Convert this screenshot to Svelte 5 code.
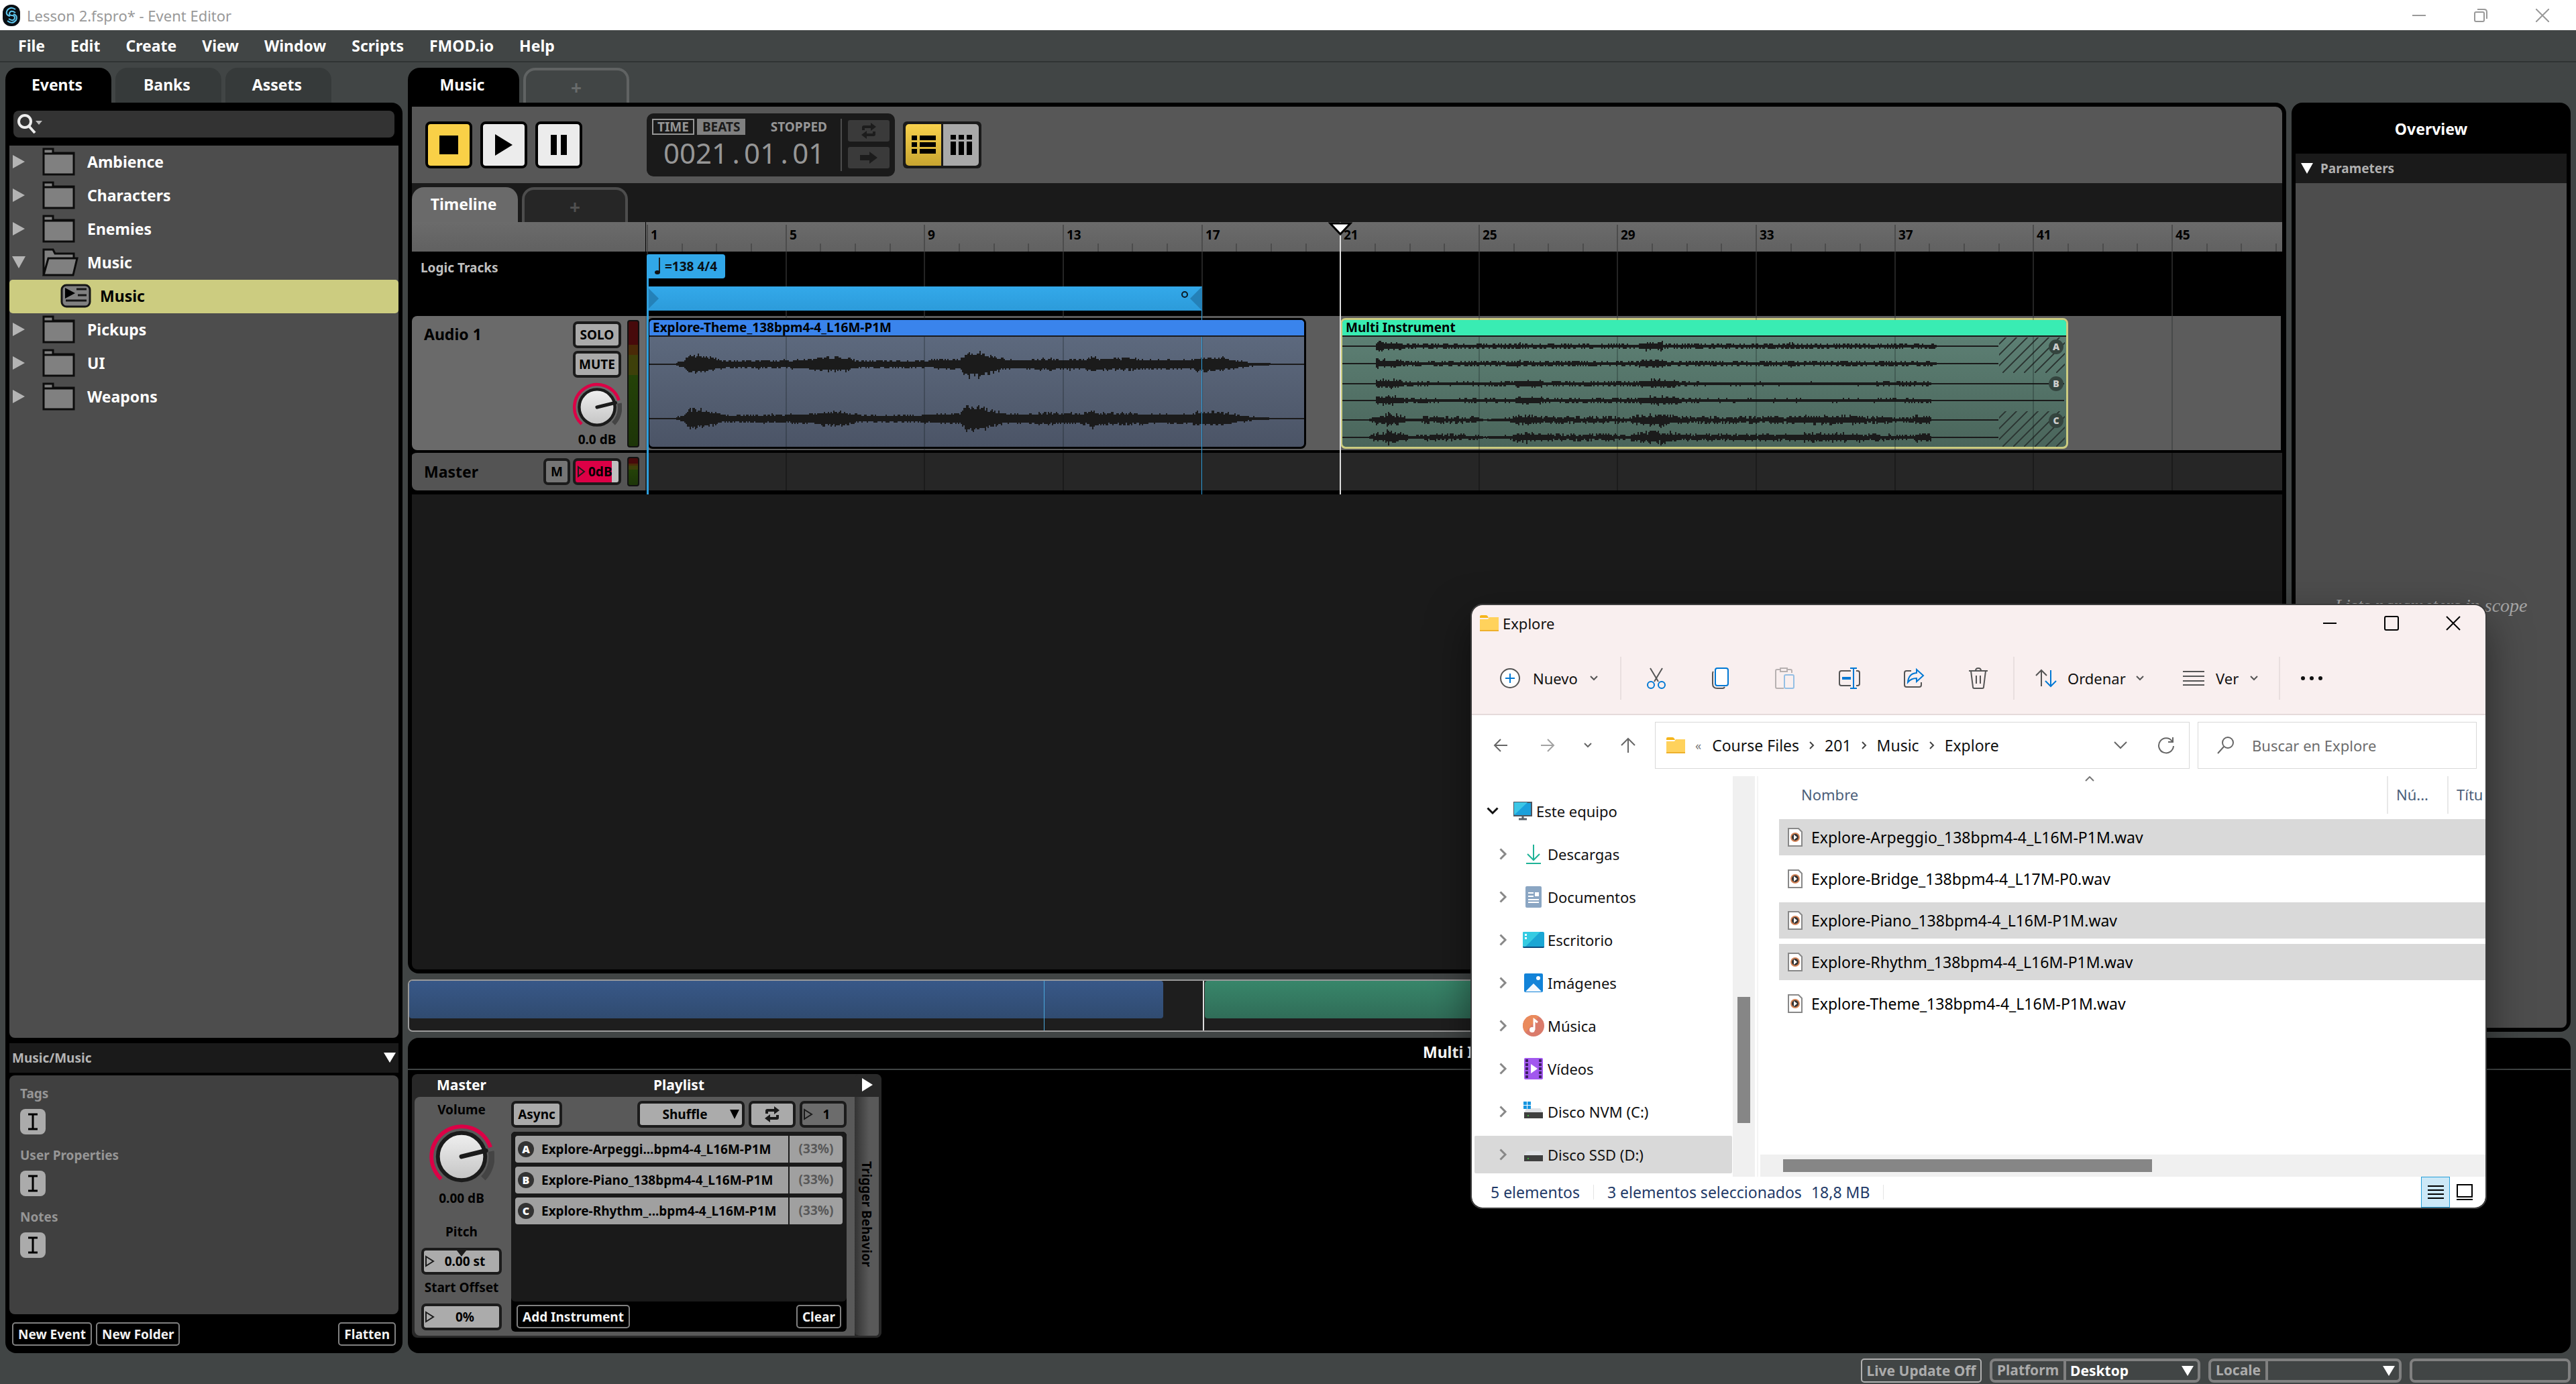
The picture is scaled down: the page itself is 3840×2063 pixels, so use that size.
<script>
  const menus = ['File', 'Edit', 'Create', 'View', 'Window', 'Scripts', 'FMOD.io', 'Help'];
  const tree = [
    { name: 'Ambience' },
    { name: 'Characters' },
    { name: 'Enemies' },
    { name: 'Music', open: true },
    { name: 'Music', event: true },
    { name: 'Pickups' },
    { name: 'UI' },
    { name: 'Weapons' }
  ];
  const props = ['Tags', 'User Properties', 'Notes'];
  const playlist = [
    { id: 'A', name: 'Explore-Arpeggi...bpm4-4_L16M-P1M' },
    { id: 'B', name: 'Explore-Piano_138bpm4-4_L16M-P1M' },
    { id: 'C', name: 'Explore-Rhythm_...bpm4-4_L16M-P1M' }
  ];
  const places = [
    { name: 'Descargas', icon: 'down' },
    { name: 'Documentos', icon: 'doc' },
    { name: 'Escritorio', icon: 'desk' },
    { name: 'Imágenes', icon: 'img' },
    { name: 'Música', icon: 'music' },
    { name: 'Vídeos', icon: 'video' },
    { name: 'Disco NVM (C:)', icon: 'nvm' },
    { name: 'Disco SSD (D:)', icon: 'ssd', selected: true }
  ];
  const files = [
    { name: 'Explore-Arpeggio_138bpm4-4_L16M-P1M.wav', selected: true },
    { name: 'Explore-Bridge_138bpm4-4_L17M-P0.wav' },
    { name: 'Explore-Piano_138bpm4-4_L16M-P1M.wav', selected: true },
    { name: 'Explore-Rhythm_138bpm4-4_L16M-P1M.wav', selected: true },
    { name: 'Explore-Theme_138bpm4-4_L16M-P1M.wav' }
  ];

  // Timeline scale: x position inside a lane for a given bar number
  const barWidth = 51.66;
  const barX = (bar) => Math.round(2 + (bar - 1) * barWidth);
  const bars = Array.from({ length: 48 }, (_, i) => i + 1);
  const majors = bars.filter((b) => b % 4 === 1);

  function noise(seed) {
    let s = seed;
    return () => {
      s = (s * 1103515245 + 12345) % 2147483648;
      return s / 2147483648;
    };
  }

  // Builds a stepped waveform outline from [x, amplitude] key points
  function wave(points, mid, seed, jitter = 0.5) {
    const rand = noise(seed);
    const top = [];
    const bottom = [];
    const last = points[points.length - 1][0];
    let k = 0;
    for (let x = 0; x < last; x += 2) {
      while (k < points.length - 2 && points[k + 1][0] <= x) k++;
      const [x0, a0] = points[k];
      const [x1, a1] = points[k + 1];
      const base = a0 + ((a1 - a0) * (x - x0)) / (x1 - x0);
      const amp = (r) => (base <= 1 ? 1 : Math.max(1, Math.round((base * (1 - jitter * 0.3 + jitter * r * r)) / 2) * 2));
      const up = amp(rand());
      const dn = amp(rand());
      top.push(`L${x} ${mid - up}L${x + 2} ${mid - up}`);
      bottom.unshift(`L${x + 2} ${mid + dn}L${x} ${mid + dn}`);
    }
    return `M0 ${mid}` + top.join('') + bottom.join('') + 'Z';
  }

  const theme = [[0, 1], [38, 1], [42, 3], [50, 4], [58, 13], [84, 11], [110, 5], [140, 5], [225, 6], [262, 9], [285, 10], [310, 5], [400, 5], [455, 7], [463, 6], [472, 17], [490, 16], [510, 11], [535, 6], [560, 6], [594, 8], [630, 7], [650, 7], [660, 12], [670, 8], [721, 8], [760, 6], [804, 6], [815, 9], [850, 9], [870, 6], [895, 3], [925, 1], [975, 1]];
  const arp = [[0, 1], [48, 1], [50, 6], [62, 6], [64, 4], [86, 4], [88, 3], [255, 3], [262, 4], [270, 3], [436, 3], [455, 5], [475, 5], [480, 3], [660, 3], [670, 4], [680, 3], [700, 3], [800, 3], [884, 3], [886, 1], [978, 1]];
  const piano = [[0, 1], [48, 1], [50, 5], [85, 5], [90, 3], [150, 2], [255, 3], [262, 4], [295, 4], [300, 3], [436, 3], [458, 5], [485, 5], [505, 3], [550, 2], [700, 2], [770, 2], [876, 3], [878, 1], [1076, 1]];
  const rhythm = [[0, 1], [38, 1], [42, 3], [70, 8], [90, 5], [98, 2], [115, 2], [122, 4], [160, 4], [200, 3], [210, 1], [245, 2], [255, 4], [275, 6], [300, 4], [350, 4], [400, 4], [425, 2], [440, 6], [475, 7], [505, 4], [540, 4], [600, 4], [660, 4], [700, 5], [740, 5], [780, 4], [826, 3], [848, 3], [855, 5], [874, 5], [878, 1], [978, 1]];
  const themeWaves = [wave(theme, 41, 7), wave(theme, 122, 91)];
  const multiWaves = [wave(arp, 14, 5, 0.8), wave(arp, 40, 11, 0.8), wave(piano, 70, 23, 0.8), wave(piano, 95, 31, 0.8), wave(rhythm, 124, 47, 1), wave(rhythm, 150, 59, 1)];
  const hatch = Array.from({ length: 11 }, (_, i) => i);
</script>

{#snippet chev(dir)}
  <svg class="chev" class:right={dir === 'right'} viewBox="0 0 12 12" width="12" height="12" aria-hidden="true"><path d="M1 3l5 5 5-5" /></svg>
{/snippet}

{#snippet knob(size, label)}
  <label class="knob">
    <svg viewBox="-50 -50 100 100" width={size} height={size} aria-hidden="true">
      <defs><linearGradient id="cap{size}" x1="0" y1="0" x2="0" y2="1"><stop offset="0" stop-color="#f0f0f0" /><stop offset="1" stop-color="#c4c4c4" /></linearGradient></defs>
      <path d="M-31 34A46 46 0 1 1 44 -14" fill="none" stroke="#dc0046" stroke-width="6" />
      <path d="M45 -8A46 46 0 0 1 33 33" fill="none" stroke="#444" stroke-width="9" />
      <circle r="36" fill="url(#cap{size})" stroke="#1b1b1b" stroke-width="6" />
      <path d="M0 0L37 -9" stroke="#1b1b1b" stroke-width="7" stroke-linecap="round" />
    </svg>
    <input type="range" aria-label={label} />
  </label>
{/snippet}

{#snippet loopIcon(color)}
  <svg viewBox="0 0 28 24" width="28" height="24" fill={color} aria-hidden="true"><path d="M4 11V7q0-3 3-3h10V0l8 6-8 6V8H8v3zM24 13v4q0 3-3 3H11v4l-8-6 8-6v4h9v-3z" /></svg>
{/snippet}

{#snippet gridLines()}
  <svg class="grid-lines" aria-hidden="true">
    {#each majors as b}<rect x={barX(b)} y="0" width="2" height="100%" />{/each}
  </svg>
{/snippet}

{#snippet folderIcon()}
  <svg viewBox="0 0 28 24" width="28" height="24" aria-hidden="true">
    <path d="M0 2q0-2 2-2h7q2 0 3 2l1 2H0z" fill="#f5b51c" /><path d="M0 6h12l2-3h14v19q0 1-1 1H0z" fill="#ffd25c" /><path d="M0 22h28v2H0z" fill="#eeb02c" />
  </svg>
{/snippet}

{#snippet placeIcon(kind)}
  <svg viewBox="0 0 32 32" width="32" height="32" aria-hidden="true">
    {#if kind === 'down'}
      <path d="M16 2v23M7 16l9 9 9-9M5 30h22" fill="none" stroke="#1fb397" stroke-width="2" />
    {:else if kind === 'doc'}
      <rect x="4" width="24" height="32" rx="2" fill="#8ba6c3" /><path d="M8 10h8M8 15h8M8 20h16M8 24h16" stroke="#fff" stroke-width="2" /><rect x="18" y="9" width="6" height="6" fill="#fff" />
    {:else if kind === 'desk'}
      <rect y="4" width="32" height="24" rx="2" fill="#1ba6d4" /><path d="M0 6q0-2 2-2h24L4 26H0z" fill="#35cbe2" /><path d="M0 26h32q0 2-2 2H2q-2 0-2-2z" fill="#0b4a7c" /><path d="M3 7h3v3H3zM3 12h3v3H3z" fill="#fff" />
    {:else if kind === 'img'}
      <rect x="2" y="2" width="28" height="28" rx="2" fill="#1283d8" /><path d="M4 29l12-12 12 12z" fill="#f1f7fd" /><circle cx="23" cy="9" r="3" fill="#fff" />
    {:else if kind === 'music'}
      <circle cx="16" cy="16" r="16" fill="#da7b6b" /><path d="M2 8A16 16 0 0 1 24 2L4 26A16 16 0 0 1 2 8z" fill="#ea8a5c" /><circle cx="14" cy="22" r="4" fill="#fff" /><path d="M17 22V7l5 4" fill="none" stroke="#fff" stroke-width="3" />
    {:else if kind === 'video'}
      <rect x="2" width="28" height="32" rx="2" fill="#a258ef" /><path d="M6 2v28M26 2v28" stroke="#3c2161" stroke-width="4" stroke-dasharray="4 2" /><path d="M12 9l10 7-10 7z" fill="#fff" />
    {:else}
      <path d="M6 11h20l4 6H2z" fill="#e0e2e6" /><rect x="2" y="17" width="28" height="9" fill="#3f3f3f" /><circle cx="8" cy="22" r="1" fill="#3fdf3f" />
      {#if kind === 'nvm'}<path d="M1 1h5v5H1zM7 1h5v5H7zM1 7h5v5H1zM7 7h5v5H7z" fill="#1795e0" />{/if}
    {/if}
  </svg>
{/snippet}

<div class="app">
  <header class="titlebar">
    <svg viewBox="0 0 26 32" width="26" height="32" aria-hidden="true"><rect width="26" height="32" rx="12" fill="#0a0f14" /><path d="M19 7Q12 2 7 8q-4 7 4 9M7 24q7 6 13-1 3-7-4-9M19 12q-7-5-9 1 0 3 4 3t4 4q-2 6-9 1" fill="none" stroke="#5fc7ee" stroke-width="2" /></svg>
    <span class="title">Lesson 2.fspro* - Event Editor</span>
    <div class="win-controls">
      <button aria-label="Minimize"><svg viewBox="0 0 20 20" width="20" height="20"><path d="M0 10h20" /></svg></button>
      <button aria-label="Restore"><svg viewBox="0 0 20 20" width="20" height="20"><rect x="1" y="5" width="14" height="14" rx="2" /><path d="M5 1h10q4 0 4 4v10" /></svg></button>
      <button aria-label="Close"><svg viewBox="0 0 20 20" width="20" height="20"><path d="M0 0l20 20M20 0L0 20" /></svg></button>
    </div>
  </header>

  <nav class="menubar">
    {#each menus as m}<button>{m}</button>{/each}
  </nav>

  <main class="workspace">
    <aside class="browser">
      <div class="tabs">
        <button class="tab active">Events</button><button class="tab dim">Banks</button><button class="tab dim">Assets</button>
      </div>
      <div class="browser-panel">
        <label class="search">
          <svg viewBox="0 0 40 32" width="40" height="32" aria-hidden="true"><circle cx="13" cy="12" r="9" fill="none" stroke="#eee" stroke-width="4" /><path d="M19 19l9 10" stroke="#eee" stroke-width="4" /><path d="M29 11h10l-5 6z" fill="#bbb" /></svg>
          <input type="text" aria-label="Search events" />
        </label>
        <ul class="tree">
          {#each tree as t}
            <li>
              <button class="tree-row" class:selected={t.event}>
                {#if t.event}
                  <svg class="event-icon" viewBox="0 0 46 36" width="46" height="36" aria-hidden="true"><rect x="2" y="2" width="42" height="32" rx="7" fill="#808080" stroke="#161616" stroke-width="3" /><path d="M7 6l15 8-15 8z" fill="#000" /><path d="M24 8h15M26 17h13M8 25h31" stroke="#161616" stroke-width="3" /></svg>
                {:else}
                  <svg class="arrow" viewBox="0 0 20 20" width="20" height="20" aria-hidden="true">
                    {#if t.open}<path d="M0 1h20L10 19z" />{:else}<path d="M1 0l18 10L1 20z" />{/if}
                  </svg>
                  <svg class="folder" viewBox="0 0 54 42" width="54" height="42" aria-hidden="true">
                    {#if t.open}
                      <path d="M2 40V2h14l3 6h28v8M2 40L9 15h43l-6 25z" />
                    {:else}
                      <path d="M2 40V2h14v6h31v32zM2 9h45" />
                    {/if}
                  </svg>
                {/if}
                <span>{t.name}</span>
              </button>
            </li>
          {/each}
        </ul>
        <button class="section-bar">
          <span>Music/Music</span>
          <svg viewBox="0 0 18 15" width="18" height="15" aria-hidden="true"><path d="M0 0h18L9 15z" fill="#fff" /></svg>
        </button>
        <div class="props">
          {#each props as p}
            <div class="prop">
              <span>{p}</span>
              <button aria-label="Edit {p}"><svg viewBox="0 0 14 26" width="14" height="26"><path d="M0 2h14M0 24h14M7 2v22" stroke="#000" stroke-width="3" /></svg></button>
            </div>
          {/each}
        </div>
        <div class="browser-actions">
          <button class="outline">New Event</button><button class="outline">New Folder</button><button class="outline push">Flatten</button>
        </div>
      </div>
    </aside>

    <section class="editor">
      <div class="editor-top">
        <div class="timeline-col">
          <div class="tabs"><button class="tab active wide">Music</button><button class="tab add" aria-label="New tab">+</button></div>
          <div class="event-panel">
            <div class="transport">
              <div class="play-group">
                <button class="tbtn on" aria-label="Stop"><svg viewBox="0 0 28 28" width="28" height="28"><path d="M0 0h28v28H0z" /></svg></button>
                <button class="tbtn" aria-label="Play"><svg viewBox="0 0 28 32" width="28" height="32"><path d="M1 0l26 16L1 32z" /></svg></button>
                <button class="tbtn" aria-label="Pause"><svg viewBox="0 0 24 30" width="24" height="30"><path d="M0 0h9v30H0zM15 0h9v30h-9z" /></svg></button>
              </div>
              <div class="display">
                <div class="readout">
                  <div class="modes"><button>TIME</button><button class="lit">BEATS</button><span>STOPPED</span></div>
                  <div class="clock">0021<i>.</i>01<i>.</i>01</div>
                </div>
                <div class="display-side">
                  <button aria-label="Loop">{@render loopIcon('#1c1c1c')}</button>
                  <button aria-label="Follow playback"><svg viewBox="0 0 26 20" width="26" height="20"><path d="M0 6h14V1l12 9-12 9v-5H0z" fill="#1c1c1c" /></svg></button>
                </div>
              </div>
              <div class="views">
                <button class="on" aria-label="Track view"><svg viewBox="0 0 36 28" width="36" height="28"><path d="M0 0h8v7H0zM12 0h24v7H12zM0 10h8v7H0zM12 10h24v7H12zM0 20h8v7H0zM12 20h24v7H12z" /></svg></button>
                <button aria-label="Mixer view"><svg viewBox="0 0 32 30" width="32" height="30"><path d="M0 0h8v7H0zM12 0h8v7h-8zM24 0h8v7h-8zM0 10h8v20H0zM12 10h8v20h-8zM24 10h8v20h-8z" /></svg></button>
              </div>
            </div>

            <div class="tabs inner"><button class="tab sheet">Timeline</button><button class="tab add dark" aria-label="Add parameter sheet">+</button></div>

            <div class="timeline">
              <div class="head ruler-head"></div>
              <div class="lane ruler">
                <svg class="grid-lines" aria-hidden="true">
                  {#each bars as b}<rect x={barX(b) - 1} y={b % 4 === 1 ? 4 : 32} width="2" height="100%" />{/each}
                </svg>
                {#each majors as b}<span class="bar-no" style="left:{barX(b) + 5}px">{b}</span>{/each}
              </div>

              <div class="head logic-head">Logic Tracks</div>
              <div class="lane logic">
                {@render gridLines()}
                <button class="tempo" style="left:{barX(1)}px">
                  <svg viewBox="0 0 10 26" width="10" height="26" aria-hidden="true"><path d="M8 0v22" stroke="#222" stroke-width="2" /><ellipse cx="5" cy="22" rx="4" ry="3" fill="#111" /></svg>=138 4/4
                </button>
                <div class="region" style="left:{barX(1)}px;width:{barX(17) - barX(1) + 1}px">
                  <svg viewBox="0 0 18 36" width="18" height="36" aria-hidden="true"><path d="M0 0l18 18L0 36z" /></svg>
                  <svg viewBox="0 0 32 36" width="32" height="36" aria-hidden="true"><circle cx="6" cy="12" r="4" fill="none" stroke="#0a1c28" stroke-width="2" /><path d="M32 0L14 18l18 18z" /></svg>
                </div>
              </div>

              <div class="head audio-head">
                <span class="track-name">Audio 1</span>
                <div class="track-tools">
                  <button class="key">SOLO</button>
                  <button class="key">MUTE</button>
                  {@render knob(74, 'Audio 1 volume')}
                  <span class="db">0.0 dB</span>
                </div>
                <div class="meter"></div>
              </div>
              <div class="lane audio">
                <div class="clip theme" style="left:{barX(1) + 1}px;width:{barX(20) - barX(1)}px">
                  <div class="clip-name">Explore-Theme_138bpm4-4_L16M-P1M</div>
                  <svg class="waves" aria-hidden="true">{#each themeWaves as d}<path {d} />{/each}</svg>
                </div>
                <div class="clip multi" style="left:{barX(21) + 1}px;width:{barX(42) - barX(21)}px">
                  <div class="clip-name">Multi Instrument</div>
                  <svg class="waves" aria-hidden="true">
                    <defs><clipPath id="tail"><path d="M979 1h98v53h-98zM979 111h98v53h-98z" /></clipPath></defs>
                    {#each multiWaves as d}<path {d} />{/each}
                    <g clip-path="url(#tail)" stroke="#2f3b37" stroke-width="2">
                      {#each hatch as h}
                        <line x1={920 + h * 16} y1="54" x2={973 + h * 16} y2="1" /><line x1={920 + h * 16} y1="164" x2={973 + h * 16} y2="111" />
                      {/each}
                    </g>
                  </svg>
                  <div class="clip-ids"><b>A</b><b>B</b><b>C</b></div>
                </div>
                {@render gridLines()}
              </div>

              <div class="head master-head">
                <span class="track-name">Master</span>
                <button class="key small">M</button>
                <button class="key level"><svg viewBox="0 0 14 18" width="14" height="18" aria-hidden="true"><path d="M2 2l9 7-9 7z" fill="none" stroke="#1b1b1b" stroke-width="2" /></svg>0dB</button>
                <div class="meter short"></div>
              </div>
              <div class="lane master">{@render gridLines()}</div>

              <div class="cursor-layer" aria-hidden="true">
                <div class="edge start" style="left:{barX(1)}px"></div>
                <div class="edge end" style="left:{barX(17)}px"></div>
                <div class="playhead" style="left:{barX(21)}px">
                  <svg viewBox="0 0 36 20" width="36" height="20"><path d="M3 2h30L18 18z" fill="#fff" stroke="#000" stroke-width="3" /></svg>
                </div>
              </div>
            </div>
          </div>
          <div class="minimap">
            <div class="mini blue"></div><div class="mini green"></div>
            <div class="mini-line loop"></div><div class="mini-line head-line"></div>
          </div>
        </div>

        <aside class="overview">
          <h2>Overview</h2>
          <button class="params"><svg viewBox="0 0 18 16" width="18" height="16" aria-hidden="true"><path d="M0 0h18L9 16z" fill="#fff" /></svg>Parameters</button>
          <div class="params-body">Lists parameters in scope</div>
        </aside>
      </div>

      <section class="deck">
        <h2>Multi Instrument</h2>
        <div class="deck-body">
          <div class="module">
            <div class="module-main">
              <div class="module-head"><span>Master</span><span>Playlist</span></div>
              <div class="module-body">
                <div class="mix">
                  <span class="lbl tall">Volume</span>
                  {@render knob(98, 'Volume')}
                  <span class="lbl">0.00 dB</span>
                  <label class="field-group first"><span class="lbl">Pitch</span>
                    <span class="field centre"><svg viewBox="0 0 14 18" width="14" height="18" aria-hidden="true"><path d="M1 2l11 7-11 7z" fill="none" stroke="#1b1b1b" stroke-width="2" /></svg><input type="text" value="0.00 st" /></span></label>
                  <label class="field-group"><span class="lbl">Start Offset</span>
                    <span class="field"><svg viewBox="0 0 14 18" width="14" height="18" aria-hidden="true"><path d="M1 2l11 7-11 7z" fill="none" stroke="#1b1b1b" stroke-width="2" /></svg><input type="text" value="0%" /></span></label>
                </div>
                <div class="list-col">
                  <div class="list-tools">
                    <button class="key async">Async</button>
                    <span class="select-wrap"><select aria-label="Playlist mode"><option>Shuffle</option></select><svg viewBox="0 0 14 14" width="14" height="14" aria-hidden="true"><path d="M0 0h14L7 14z" /></svg></span>
                    <button class="key loop" aria-label="Loop playlist">{@render loopIcon('#1a1a1a')}</button>
                    <label class="field count"><svg viewBox="0 0 14 18" width="14" height="18" aria-hidden="true"><path d="M1 2l11 7-11 7z" fill="none" stroke="#1b1b1b" stroke-width="2" /></svg><input type="text" value="1" aria-label="Play count" /></label>
                  </div>
                  <div class="list-box">
                    <ul>
                      {#each playlist as p}
                        <li><span class="entry"><b>{p.id}</b>{p.name}</span><span class="pct">(33%)</span></li>
                      {/each}
                    </ul>
                    <div class="list-foot"><button class="outline">Add Instrument</button><button class="outline">Clear</button></div>
                  </div>
                </div>
              </div>
            </div>
            <button class="module-side">
              <svg viewBox="0 0 16 20" width="16" height="20" aria-hidden="true"><path d="M0 0l16 10L0 20z" fill="#fff" /></svg>
              <span>Trigger Behavior</span>
            </button>
          </div>
        </div>
      </section>
    </section>
  </main>

  <footer class="statusbar">
    <button class="live">Live Update Off</button>
    <label class="combo platform"><span>Platform</span><select><option>Desktop</option></select><svg viewBox="0 0 18 15" width="18" height="15" aria-hidden="true"><path d="M0 0h18L9 15z" fill="#fff" /></svg></label>
    <label class="combo locale"><span>Locale</span><select><option></option></select><svg viewBox="0 0 18 15" width="18" height="15" aria-hidden="true"><path d="M0 0h18L9 15z" fill="#fff" /></svg></label>
    <div class="combo blank"></div>
  </footer>

  <section class="explorer" aria-label="Explore">
    <header class="ex-title">
      {@render folderIcon()}<span>Explore</span>
      <div class="ex-controls">
        <button aria-label="Minimizar"><svg viewBox="0 0 22 22" width="22" height="22"><path d="M1 11h20" /></svg></button>
        <button aria-label="Maximizar"><svg viewBox="0 0 22 22" width="22" height="22"><rect x="1" y="1" width="20" height="20" rx="2" /></svg></button>
        <button aria-label="Cerrar"><svg viewBox="0 0 22 22" width="22" height="22"><path d="M1 1l20 20M21 1L1 21" /></svg></button>
      </div>
    </header>
    <div class="ex-cmd">
      <button class="new"><svg viewBox="0 0 32 32" width="32" height="32"><circle cx="16" cy="16" r="14" fill="#fff" stroke="#555" stroke-width="2" /><path class="blue" d="M16 9v14M9 16h14" /></svg>Nuevo{@render chev()}</button>
      <span class="sep"></span>
      <button class="ic" aria-label="Cortar"><svg viewBox="0 0 32 32" width="32" height="32"><path d="M7 1l12 20M25 1L13 21" /><circle class="blue" cx="8" cy="26" r="5" /><circle class="blue" cx="24" cy="26" r="5" /></svg></button>
      <button class="ic" aria-label="Copiar"><svg viewBox="0 0 32 32" width="32" height="32"><path d="M5 6q-1 1-1 3v15q0 7 7 7h8q2 0 3-2" /><rect class="blue" x="8" y="1" width="19" height="26" rx="3" fill="#fff" /></svg></button>
      <button class="ic faded" aria-label="Pegar"><svg viewBox="0 0 32 32" width="32" height="32"><path d="M14 31H4q-2 0-2-2V5q0-2 2-2h5M19 3h5q2 0 2 2v3M9 1h10v5H9z" /><rect class="blue" x="15" y="11" width="14" height="20" rx="2" /></svg></button>
      <button class="ic" aria-label="Cambiar nombre"><svg viewBox="0 0 32 32" width="32" height="32"><path d="M18 5H4q-3 0-3 3v16q0 3 3 3h14M26 5h2q3 0 3 3v16q0 3-3 3h-2" /><path class="blue" d="M17 1h10M22 1v30M17 31h10" /><path class="blue thick" d="M5 16h13" /></svg></button>
      <button class="ic" aria-label="Compartir"><svg viewBox="0 0 32 32" width="32" height="32"><path d="M12 5H5q-3 0-3 3v18q0 3 3 3h19q3 0 3-3v-4" /><path class="blue" d="M20 3l10 9-10 9v-5q-8 0-13 6 1-13 13-14z" /></svg></button>
      <button class="ic" aria-label="Eliminar"><svg viewBox="0 0 32 32" width="32" height="32"><path d="M2 5h28M5 5l3 24q0 2 2 2h12q2 0 2-2l3-24M12 5q0-4 4-4t4 4M13 12v12M19 12v12" /></svg></button>
      <span class="sep"></span>
      <button class="order"><svg viewBox="0 0 34 28" width="34" height="28"><path d="M10 26V2M2 10l8-8 8 8" /><path class="blue" d="M24 2v24M16 18l8 8 8-8" /></svg>Ordenar{@render chev()}</button>
      <button class="view"><svg viewBox="0 0 32 24" width="32" height="24"><path d="M0 2h32M0 9h32M0 16h32M0 22h32" /></svg>Ver{@render chev()}</button>
      <span class="sep"></span>
      <button class="more" aria-label="Más"><svg viewBox="0 0 34 8" width="34" height="8"><g fill="#111" stroke="none"><circle cx="4" cy="4" r="3" /><circle cx="17" cy="4" r="3" /><circle cx="30" cy="4" r="3" /></g></svg></button>
    </div>
    <div class="ex-nav">
      <button aria-label="Atrás"><svg viewBox="0 0 22 20" width="22" height="20"><path d="M21 10H2M11 1l-9 9 9 9" /></svg></button>
      <button class="faint" aria-label="Adelante"><svg viewBox="0 0 22 20" width="22" height="20"><path d="M1 10h19M11 1l9 9-9 9" /></svg></button>
      <button class="slim" aria-label="Recientes">{@render chev()}</button>
      <button aria-label="Subir"><svg viewBox="0 0 22 24" width="22" height="24"><path d="M11 23V2M1 12L11 2l10 10" /></svg></button>
      <div class="address">
        {@render folderIcon()}<span class="back">«</span>
        <a href="#course">Course Files</a>{@render chev('right')}<a href="#201">201</a>{@render chev('right')}<a href="#music">Music</a>{@render chev('right')}<a href="#explore">Explore</a>
        <button class="push" aria-label="Historial"><svg viewBox="0 0 20 12" width="20" height="12"><path d="M1 1l9 9 9-9" /></svg></button>
        <button aria-label="Actualizar"><svg viewBox="0 0 26 26" width="26" height="26"><path d="M22 7A11 11 0 1 0 24 14M23 1v7h-7" /></svg></button>
      </div>
      <label class="ex-search">
        <svg viewBox="0 0 26 26" width="26" height="26" aria-hidden="true"><circle cx="16" cy="9" r="8" /><path d="M10 15L1 25" /></svg>
        <input type="search" placeholder="Buscar en Explore" aria-label="Buscar en Explore" />
      </label>
    </div>
    <div class="ex-body">
      <ul class="places">
        <li><button class="root">
          {@render chev()}
          <svg viewBox="0 0 28 28" width="28" height="28" aria-hidden="true"><rect x="1" y="1" width="26" height="20" fill="#1ba0dc" stroke="#4d5560" /><path d="M1 1h20L1 20z" fill="#3cc6e6" /><path d="M14 21v5M8 26h12" stroke="#59616b" stroke-width="3" /></svg>Este equipo
        </button></li>
        {#each places as p}
          <li><button class:selected={p.selected}>{@render chev('right')}{@render placeIcon(p.icon)}{p.name}</button></li>
        {/each}
      </ul>
      <div class="vscroll"><div></div></div>
      <div class="files">
        <table>
          <thead><tr><th class="name">Nombre<svg viewBox="0 0 14 8" width="14" height="8" aria-hidden="true"><path d="M1 7l6-6 6 6" /></svg></th><th>Nú...</th><th>Títu</th></tr></thead>
          <tbody>
            {#each files as f}
              <tr class:selected={f.selected}>
                <td colspan="3"><div class="file">
                  <svg viewBox="0 0 22 28" width="22" height="28" aria-hidden="true"><path d="M1 1h15l5 5v21H1z" fill="#fff" stroke="#888" /><circle cx="11" cy="14" r="6" fill="#333" stroke="#d58457" stroke-width="2" /><path d="M9 10l5 4-5 4z" fill="#fff" /></svg>{f.name}
                </div></td>
              </tr>
            {/each}
          </tbody>
        </table>
        <div class="hscroll"><div></div></div>
      </div>
    </div>
    <footer class="ex-status">
      <span>5 elementos</span><i></i><span>3 elementos seleccionados</span><span class="size">18,8 MB</span><i></i>
      <button class="on" aria-label="Detalles"><svg viewBox="0 0 24 22" width="24" height="22"><path d="M0 2h24M0 8h24M0 14h24M0 20h24" stroke="#000" stroke-width="2" /></svg></button>
      <button aria-label="Iconos grandes"><svg viewBox="0 0 24 24" width="24" height="24"><path d="M1 1h22v18H1zM0 23h24" fill="none" stroke="#000" stroke-width="2" /></svg></button>
    </footer>
  </section>
</div>

<style>
  :global(body) { background: #414545; }
  * { box-sizing: border-box; }
  button, input, select { font: inherit; color: inherit; background: none; border: 0; padding: 0; margin: 0; }
  ul { list-style: none; margin: 0; padding: 0; }
  h2 { margin: 0; font-size: 23px; line-height: 30px; text-align: center; color: #fff; }
  svg { display: block; flex: none; }
  .push { margin-left: auto; }

  .app { position: relative; display: flex; flex-direction: column; min-height: 100vh; overflow: hidden; background: #414545; font: 700 19px/26px 'Noto Sans', 'Open Sans', sans-serif; color: #fff; }

  .titlebar { display: flex; align-items: center; height: 45px; padding: 0 4px; gap: 10px; background: #fff; color: #999; font-weight: 400; font-size: 22px; }
  .win-controls { display: flex; margin-left: auto; }
  .win-controls button { display: grid; place-items: center; width: 92px; height: 42px; }
  .win-controls svg { fill: none; stroke: #999; stroke-width: 2; }

  .menubar { display: flex; gap: 38px; height: 48px; padding: 0 27px; border-bottom: 2px solid #303434; font-size: 23px; }

  .workspace { flex: 1; display: grid; grid-template-columns: 592px minmax(0, 1fr); gap: 8px; padding: 8px 8px 0; }
  .browser, .editor, .timeline-col { display: flex; flex-direction: column; min-width: 0; }

  .tabs { display: flex; gap: 6px; height: 52px; }
  .tab { width: 158px; padding: 0 4px 2px 0; border-radius: 18px 18px 0 0; font-size: 23px; }
  .tab.active { background: #000; }
  .tab.wide { width: 166px; }
  .tab.dim { background: #363a3a; }
  .tab.add { padding: 2px 0 0; border: 4px solid #606363; border-bottom: 0; color: #686b6b; font-size: 28px; }
  .tab.add.dark { background: #262626; border-color: #4d4d4d; color: #505050; }
  .tab.sheet { background: #6a6a6a; }
  .tabs.inner { height: 58px; padding-top: 6px; background: #1a1a1a; }

  .browser-panel { flex: 1; display: flex; flex-direction: column; background: #000; border-radius: 0 16px 16px 16px; padding: 12px 6px 11px; }
  .search { display: flex; align-items: center; height: 40px; margin: 0 6px 12px; padding-left: 4px; border-radius: 8px; background: #333; }
  .search input { flex: 1; outline: 0; }
  .tree { flex: 1; background: #4d4d4d; border-radius: 0 0 8px 8px; }
  .tree-row { display: flex; align-items: center; width: 100%; height: 50px; padding: 0 0 2px 4px; font-size: 23px; text-align: left; }
  .tree-row.selected { background: #cccc80; color: #000; border-radius: 5px; padding-left: 76px; }
  .arrow { fill: #b4b4b4; margin-right: 25px; }
  .folder { fill: #808080; stroke: #0c0c0c; stroke-width: 3; margin-right: 13px; }
  .event-icon { margin-right: 13px; }
  .section-bar { display: flex; align-items: center; justify-content: space-between; height: 44px; margin: 8px 0 4px; padding: 0 4px 1px 4px; background: #1a1a1a; color: #b4b4b4; }
  .props { height: 356px; padding: 14px 16px; background: #404040; border-radius: 8px; color: #969696; }
  .prop { display: flex; flex-direction: column; align-items: flex-start; gap: 10px; height: 92px; }
  .prop button { display: grid; place-items: center; width: 38px; height: 38px; border-radius: 8px; background: #ababab; }
  .browser-actions { display: flex; gap: 6px; padding: 12px 4px 0; }
  .outline { height: 35px; padding: 0 7px; border: 2px solid #808080; border-radius: 5px; background: #000; color: #f2f2f2; line-height: 28px; }

  .editor { gap: 9px; }
  .editor-top { flex: 1; display: grid; grid-template-columns: minmax(0, 1fr) 416px; gap: 8px; }
  .event-panel { flex: 1; display: flex; flex-direction: column; background: #000; border-radius: 0 16px 16px 16px; padding: 6px; }
  .event-panel::after { content: ''; flex: 1; background: #1a1a1a; border-radius: 0 0 8px 8px; }

  .transport { display: flex; align-items: center; height: 114px; padding: 0 20px; background: #575757; border-radius: 0 10px 0 0; }
  .play-group { display: flex; gap: 12px; }
  .tbtn { display: grid; place-items: center; width: 70px; height: 70px; border: 4px solid #000; border-radius: 8px; background: #ececec; }
  .tbtn.on { background: #f9d047; }
  .display { display: flex; width: 370px; height: 94px; margin-left: 96px; padding: 8px; border-radius: 10px; background: #1a1a1a; color: #969696; }
  .readout { width: 283px; border-right: 2px solid #4d4d4d; }
  .modes { display: flex; align-items: center; gap: 4px; height: 24px; }
  .modes button { height: 24px; padding: 0 6px; border: 2px solid #969696; line-height: 19px; }
  .modes .lit { background: #808080; border-color: #808080; color: #1a1a1a; }
  .modes span { margin: 0 20px 0 auto; }
  .clock { display: flex; padding-left: 17px; font-size: 42px; line-height: 54px; font-weight: 400; }
  .clock i { width: 24px; text-align: center; font-style: normal; }
  .display-side { display: flex; flex-direction: column; gap: 8px; padding: 2px 0 0 9px; }
  .display-side button { display: grid; place-items: center; width: 62px; height: 32px; border-radius: 3px; background: #3a3a3a; }
  .views { display: flex; margin-left: 12px; padding: 4px; height: 70px; background: #1a1a1a; border-radius: 6px; gap: 3px; }
  .views button { display: grid; place-items: center; width: 53px; background: #a9a9a9; border-radius: 0 5px 5px 0; }
  .views .on { background: linear-gradient(#f9d24c, #c8a530); border-radius: 5px 0 0 5px; }

  .timeline { position: relative; display: grid; grid-template-columns: 348px minmax(0, 1fr); grid-template-rows: 44px 96px 200px 60px; padding-bottom: 6px; }
  .head { display: flex; color: #000; }
  .lane { position: relative; overflow: hidden; }
  .grid-lines { position: absolute; inset: 0; width: 100%; height: 100%; shape-rendering: crispEdges; }
  .ruler-head, .ruler { background: linear-gradient(#6b6b6b, #616161); }
  .ruler { border-left: 1px solid #000; }
  .ruler .grid-lines { fill: #4c4c4c; }
  .bar-no { position: absolute; top: 6px; color: #000; }
  .logic-head { padding: 11px 13px; color: #c0c0c0; }
  .logic { background: #000; }
  .logic .grid-lines { fill: #242424; }
  .tempo { position: absolute; top: 4px; display: flex; align-items: center; gap: 6px; width: 117px; height: 36px; padding-left: 11px; background: #31a7e8; border-radius: 3px 4px 4px 0; color: #0a1016; }
  .region { position: absolute; top: 52px; display: flex; justify-content: space-between; height: 36px; background: linear-gradient(#33a9ea, #2c9bda); fill: #2481b8; }
  .audio-head { background: #6a6a6a; border-radius: 8px 0 0 8px; padding: 6px 9px 4px 18px; }
  .track-name { margin-right: auto; font-size: 23px; line-height: 42px; }
  .track-tools { display: flex; flex-direction: column; align-items: center; width: 72px; margin-right: 9px; padding-top: 2px; gap: 4px; }
  .key { display: grid; place-items: center; width: 72px; height: 40px; flex: none; border: 4px solid #1b1b1b; border-radius: 7px; background: #aaa; color: #000; }
  .track-tools .knob { margin: 3px 0 -3px; }
  .track-tools .db { line-height: 20px; white-space: nowrap; }
  .knob { position: relative; display: block; }
  .knob input { position: absolute; inset: 0; width: 100%; height: 100%; opacity: 0; }
  .meter { width: 18px; border: 2px solid #111; border-radius: 4px; background: linear-gradient(#470a0b 0 19%, #4a2a08 19% 27%, #3e400a 27% 43%, #244208 43%, #1d3508); }
  .audio { background: #5c5c5c; border-right: 2px solid #000; }
  .audio .grid-lines { fill: rgba(10, 20, 20, 0.25); }
  .clip { position: absolute; top: 3px; height: 195px; border: 3px solid #000; border-radius: 8px; overflow: hidden; }
  .clip-name { position: relative; z-index: 1; height: 25px; padding-left: 5px; border-bottom: 2px solid #1a1a1a; line-height: 22px; color: #000; background: #3a84ec; }
  .theme { background: linear-gradient(#5f6c81, #4b5466); }
  .multi { background: linear-gradient(#5f8377, #4a655b); border-color: #cccc80; }
  .multi .clip-name { background: #39ecb3; }
  .waves { width: 100%; height: 165px; fill: #1b1b1b; shape-rendering: crispEdges; }
  .clip-ids { position: absolute; z-index: 1; top: 29px; right: 4px; display: grid; gap: 33px; }
  .clip-ids b { width: 22px; height: 22px; border-radius: 11px; background: #34443e; color: #ccc; font-size: 14px; line-height: 22px; text-align: center; }
  .master-head, .master { border-top: 4px solid #000; }
  .master-head { align-items: center; gap: 4px; padding-right: 9px; padding-left: 18px; background: #545454; border-radius: 8px 0 0 8px; }
  .key.small { width: 40px; background: #757575; }
  .key.level { display: flex; align-items: center; justify-content: flex-start; gap: 3px; padding-left: 2px; background: linear-gradient(90deg, #dc0046 84%, #c0c0c0 84%); }
  .meter.short { height: 44px; margin-left: 5px; }
  .master { background: #262626; }
  .master .grid-lines { fill: #1b1b1b; }
  .cursor-layer { position: absolute; top: 0; bottom: 0; left: 348px; right: 0; pointer-events: none; overflow: hidden; }
  .edge { position: absolute; top: 132px; bottom: 0; width: 1px; background: #2f9fdd; }
  .edge.start { width: 3px; top: 84px; }
  .playhead { position: absolute; top: 0; bottom: 0; width: 2px; background: #ddd; }
  .playhead svg { margin-left: -17px; }

  .minimap { position: relative; height: 78px; margin-top: 9px; border: 2px solid #9a9a9a; border-radius: 7px; background: #1e1e1e; overflow: hidden; }
  .mini { position: absolute; top: 0; height: 56px; border-radius: 4px; }
  .mini.blue { left: 0; width: 40.2%; background: linear-gradient(#385888, #304b70); }
  .mini.green { left: 42.4%; width: 44%; background: linear-gradient(#38866a, #306d58); }
  .mini-line { position: absolute; top: 0; bottom: 0; width: 1px; }
  .mini-line.loop { left: 33.85%; background: #4aa8dc; }
  .mini-line.head-line { left: 42.3%; width: 2px; background: #ddd; }

  .overview { display: flex; flex-direction: column; margin-top: 52px; padding: 0 6px 6px; background: #000; border-radius: 16px; }
  .overview h2 { padding: 24px 0 22px; }
  .params { display: flex; align-items: center; gap: 11px; height: 44px; padding-left: 8px; background: #1a1a1a; color: #b0b0b0; }
  .params-body { flex: 1; display: grid; place-items: center; background: #4d4d4d; border-radius: 0 0 8px 8px; color: #a6a6a6; font: italic 400 28px/32px 'Liberation Serif', serif; }

  .deck { height: 470px; background: #000; border-radius: 16px; }
  .deck h2 { padding: 6px 0 10px; border-bottom: 2px solid #414545; }
  .deck-body { padding: 6px; }
  .module { display: flex; width: 700px; height: 393px; border-radius: 8px; background: #282828; overflow: hidden; }
  .module-main { width: 660px; }
  .module-head { display: grid; grid-template-columns: 148px 500px; height: 34px; line-height: 33px; text-align: center; font-size: 21px; }
  .module-body { display: grid; grid-template-columns: 144px 500px; height: 356px; margin-left: 4px; background: #595959; border-radius: 8px 0 0 8px; color: #000; }
  .mix { display: flex; flex-direction: column; align-items: center; padding-right: 4px; }
  .lbl { line-height: 26px; }
  .lbl.tall { line-height: 38px; height: 40px; }
  .field-group { display: flex; flex-direction: column; align-items: center; gap: 11px; padding-top: 6px; }
  .field-group.first { padding-top: 24px; }
  .field { position: relative; display: flex; align-items: center; width: 120px; height: 40px; padding-left: 2px; border: 4px solid #1b1b1b; border-radius: 7px; background: #ababab; }
  .field input { width: 100%; min-width: 0; text-align: center; padding-right: 6px; }
  .field.centre::before { content: ''; position: absolute; top: 0; left: 50%; margin-left: -7px; border: 7px solid transparent; border-top: 9px solid #1b1b1b; border-bottom: 0; }
  .list-col { padding: 6px 0; display: flex; flex-direction: column; gap: 6px; }
  .list-tools { display: flex; gap: 6px; }
  .async { width: 76px; margin-right: auto; }
  .select-wrap { position: relative; width: 160px; height: 40px; border: 4px solid #1b1b1b; border-radius: 7px; background: #ababab; }
  .select-wrap select { width: 100%; height: 100%; appearance: none; text-align: center; text-align-last: center; padding-right: 18px; }
  .select-wrap svg { position: absolute; right: 4px; top: 9px; }
  .key.loop { width: 70px; }
  .field.count { width: 70px; background: #6c6c6c; }
  .list-box { display: flex; flex-direction: column; height: 298px; background: #000; border-radius: 6px; }
  .list-box ul { flex: 1; display: flex; flex-direction: column; gap: 6px; padding: 6px; background: #1a1a1a; border-radius: 6px; }
  .list-box li { display: flex; gap: 2px; height: 40px; line-height: 39px; }
  .entry { flex: 1; display: flex; align-items: center; gap: 11px; padding-left: 4px; background: #a0a0a0; border-radius: 4px 0 0 4px; white-space: nowrap; overflow: hidden; }
  .entry b { width: 24px; height: 24px; flex: none; border-radius: 12px; background: #333; color: #fff; font-size: 16px; line-height: 24px; text-align: center; }
  .pct { width: 79px; text-align: center; background: #a0a0a0; color: #595959; border-radius: 0 4px 4px 0; }
  .list-foot { display: flex; justify-content: space-between; padding: 5px 8px; }
  .module-side { display: flex; flex-direction: column; align-items: center; width: 40px; background: linear-gradient(90deg, #333, #595959 60%); border-top: 34px solid #282828; border-right: 4px solid #282828; border-bottom: 3px solid #282828; border-radius: 8px; color: #000; }
  .module-side svg { margin: -28px 0 0 2px; }
  .module-side span { margin-top: 104px; writing-mode: vertical-rl; line-height: 32px; }

  .statusbar { display: flex; justify-content: flex-end; gap: 12px; padding: 8px 8px 2px; color: #ababab; font-size: 21px; }
  .live { width: 180px; height: 36px; border: 2px solid #b0b0b0; border-radius: 5px; white-space: nowrap; line-height: 30px; }
  .combo { position: relative; display: flex; height: 36px; border: 4px solid #808080; border-radius: 8px; line-height: 27px; }
  .combo span { padding: 0 7px; border-right: 4px solid #808080; }
  .combo select { flex: 1; appearance: none; padding-left: 6px; color: #fff; }
  .combo svg { position: absolute; right: 6px; top: 7px; }
  .platform { width: 314px; }
  .locale { width: 288px; }
  .blank { width: 240px; }

  .explorer { position: absolute; left: 2194px; top: 902px; width: 1511px; display: flex; flex-direction: column; overflow: hidden; background: #fff; border-radius: 16px; outline: 2px solid #3c3c3c; box-shadow: 0 24px 64px rgba(0, 0, 0, 0.5); color: #111; font: 400 22px/30px 'Noto Sans', 'Open Sans', sans-serif; }
  .explorer svg { fill: none; stroke-width: 2; }
  .ex-title { display: flex; align-items: center; gap: 6px; height: 56px; padding: 0 2px 2px 12px; background: #f9efef; }
  .ex-controls { display: flex; margin-left: auto; }
  .ex-controls button { display: grid; place-items: center; width: 92px; height: 54px; }
  .ex-controls svg { stroke: #000; }
  .ex-cmd { display: flex; align-items: center; height: 108px; padding-left: 41px; background: #f9efef; border-bottom: 2px solid #e5dada; }
  .ex-cmd button { display: flex; align-items: center; height: 64px; }
  .ex-cmd svg { stroke: #555; }
  .ex-cmd .blue { stroke: #0078d4; }
  .ex-cmd .thick { stroke-width: 4; }
  .ex-cmd .new { width: 176px; gap: 18px; }
  .ex-cmd .ic { width: 96px; justify-content: center; }
  .ex-cmd .faded { opacity: 0.4; }
  .ex-cmd .order { width: 218px; padding-left: 26px; gap: 15px; }
  .ex-cmd .view { width: 168px; padding-left: 29px; gap: 17px; }
  .ex-cmd .more { margin-left: 26px; }
  .sep { width: 2px; height: 64px; margin: 0 4px; background: #e9dfdf; }
  .chev { stroke: #777; }
  .chev.right { transform: rotate(-90deg); }
  .ex-nav { display: flex; align-items: center; height: 91px; padding: 0 13px 2px 8px; }
  .ex-nav button { display: grid; place-items: center; width: 70px; height: 60px; }
  .ex-nav svg { stroke: #666; }
  .ex-nav button.faint { opacity: 0.6; }
  .ex-nav button.slim { width: 50px; }
  .address { flex: 1; display: flex; align-items: center; gap: 13px; height: 70px; margin: 0 12px 0 5px; padding-left: 16px; border: 1px solid #d9d9d9; font-size: 23px; }
  .address > svg:first-child, .ex-title > svg { stroke: none; }
  .address a { color: #111; text-decoration: none; }
  .address .chev { stroke: #444; }
  .address .back { color: #777; font-size: 18px; margin: 0 3px 0 2px; }
  .address button { width: 54px; }
  .address button:last-child { width: 56px; margin-right: 6px; }
  .ex-search { display: flex; align-items: center; gap: 26px; width: 416px; height: 70px; padding-left: 28px; border: 1px solid #d9d9d9; }
  .ex-search input { flex: 1; min-width: 0; outline: 0; }
  .ex-search input::placeholder { color: #6d6d6d; opacity: 1; }
  .ex-body { display: flex; height: 597px; }
  .places { display: flex; flex-direction: column; gap: 8px; width: 389px; padding: 24px 1px 0 4px; }
  .places button { display: flex; align-items: center; width: 100%; height: 56px; padding-left: 34px; gap: 5px; border-radius: 2px; text-align: left; }
  .places svg { stroke: none; }
  .places .chev { width: 18px; height: 18px; stroke: #888; margin-right: 15px; }
  .places .root { padding-left: 18px; gap: 6px; }
  .places .root .chev { stroke: #111; margin-right: 16px; }
  .places .selected { background: #d9d9d9; }
  .vscroll { width: 33px; padding: 329px 7px 0; background: #f0f0f0; }
  .vscroll div { height: 188px; background: #868686; }
  .files { flex: 1; min-width: 0; display: flex; flex-direction: column; overflow: hidden; margin-left: 3px; border-left: 2px solid #f4f4f4; }
  table { table-layout: fixed; width: 1180px; margin: -8px 0 auto 31px; border-spacing: 0 8px; }
  th { height: 56px; padding: 0 0 2px 12px; font-weight: 400; text-align: left; color: #4c607a; border-left: 2px solid #e8e8e8; width: 90px; }
  th.name { position: relative; width: 906px; padding-left: 33px; border: 0; }
  th.name svg { position: absolute; top: 0; left: 456px; stroke: #777; }
  th:last-child { width: auto; }
  td { padding: 0; }
  .file { display: flex; align-items: center; gap: 13px; height: 54px; padding-left: 13px; color: #000; font-size: 23px; }
  .selected .file { background: #d9d9d9; }
  .hscroll { height: 33px; margin-left: 3px; padding: 7px 0 7px 34px; background: #f0f0f0; }
  .hscroll div { width: 550px; height: 19px; background: #868686; }
  .ex-status { display: flex; align-items: center; height: 46px; padding: 0 10px 0 28px; color: #1f3a68; font-size: 23px; }
  .ex-status i { width: 1px; height: 22px; margin: 0 20px; background: #e4e4e4; }
  .ex-status .size { margin-left: 14px; }
  .ex-status button { display: grid; place-items: center; width: 43px; height: 46px; }
  .ex-status .on { margin-left: auto; background: #cce8f7; border: 1px solid #26a0da; }
</style>
